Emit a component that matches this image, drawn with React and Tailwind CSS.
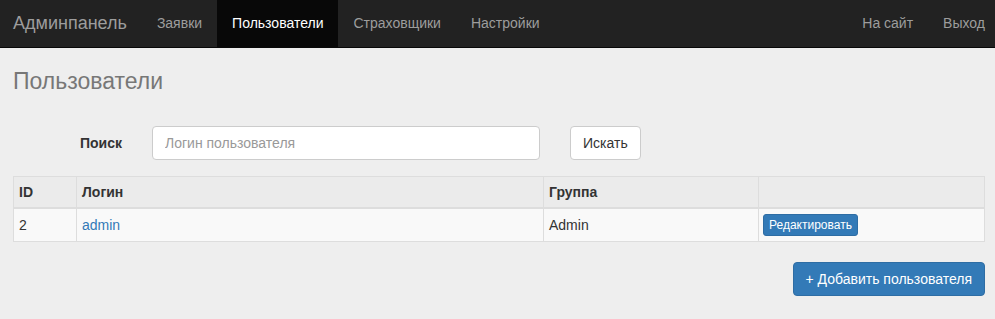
import React, { useState } from 'react';

const navItems = ['Заявки', 'Пользователи', 'Страховщики', 'Настройки'];

const users = [{ id: 2, login: 'admin', group: 'Admin' }];

const App = () => {
    const [query, setQuery] = useState('');

    return (
        <div className="min-h-[319px] bg-[#eeeeee] text-[14px] text-[#333] font-['Liberation_Sans',Arial,sans-serif]">
            <nav className="flex h-[48px] items-stretch justify-between bg-[#222] border-b border-[#080808]">
                <div className="flex items-stretch">
                    <a className="flex items-center pl-[13px] pr-[15px] text-[18px] text-[#9d9d9d]">Админпанель</a>
                    {navItems.map((item) => (
                        <a
                            key={item}
                            className={
                                item === 'Пользователи'
                                    ? 'flex items-center px-[15px] bg-[#080808] text-white'
                                    : 'flex items-center px-[15px] text-[#9d9d9d]'
                            }
                        >
                            {item}
                        </a>
                    ))}
                </div>
                <div className="flex items-stretch pr-[10px]">
                    <a className="flex items-center px-[15px] text-[#9d9d9d]">На сайт</a>
                    <a className="flex items-center pl-[15px] text-[#9d9d9d]">Выход</a>
                </div>
            </nav>

            <div className="px-[13px] pr-[10px]">
                <h3 className="mt-[20px] text-[23px] leading-[26px] text-[#777]">Пользователи</h3>

                <form className="mt-[32px] flex items-center" onSubmit={(e) => e.preventDefault()}>
                    <label className="ml-[67px] w-[72px] font-bold">Поиск</label>
                    <input
                        value={query}
                        onChange={(e) => setQuery(e.target.value)}
                        placeholder="Логин пользователя"
                        className="h-[34px] w-[388px] rounded border border-[#ccc] bg-white px-3 text-[14px] placeholder:text-[#999] outline-none"
                    />
                    <button
                        type="submit"
                        className="ml-[30px] h-[34px] rounded border border-[#ccc] bg-white px-3 text-[#333]"
                    >
                        Искать
                    </button>
                </form>

                <table className="mt-[16px] w-[972px] border-collapse border border-[#ddd] leading-[20px]">
                    <thead>
                        <tr className="bg-[#ebebeb] text-left">
                            <th className="w-[63px] border border-b-2 border-[#ddd] px-[5px] py-[5px] font-bold">ID</th>
                            <th className="w-[467px] border border-b-2 border-[#ddd] px-[5px] py-[5px] font-bold">Логин</th>
                            <th className="w-[215px] border border-b-2 border-[#ddd] px-[5px] py-[5px] font-bold">Группа</th>
                            <th className="border border-b-2 border-[#ddd] px-[5px] py-[5px]"></th>
                        </tr>
                    </thead>
                    <tbody>
                        {users.map((u) => (
                            <tr key={u.id} className="bg-[#f9f9f9]">
                                <td className="border border-[#ddd] px-[5px] py-[6px]">{u.id}</td>
                                <td className="border border-[#ddd] px-[5px] py-[6px]">
                                    <a className="text-[#337ab7]">{u.login}</a>
                                </td>
                                <td className="border border-[#ddd] px-[5px] py-[6px]">{u.group}</td>
                                <td className="border border-[#ddd] px-[4px] py-[5px]">
                                    <button className="block h-[22px] rounded-[3px] border border-[#2e6da4] bg-[#337ab7] px-[5px] text-[12px] leading-[20px] text-white">
                                        Редактировать
                                    </button>
                                </td>
                            </tr>
                        ))}
                    </tbody>
                </table>

                <div className="mt-[20px] flex justify-end w-[972px]">
                    <button className="h-[34px] rounded border border-[#2e6da4] bg-[#337ab7] px-3 text-white">
                        + Добавить пользователя
                    </button>
                </div>
            </div>
        </div>
    );
};

export default App;
